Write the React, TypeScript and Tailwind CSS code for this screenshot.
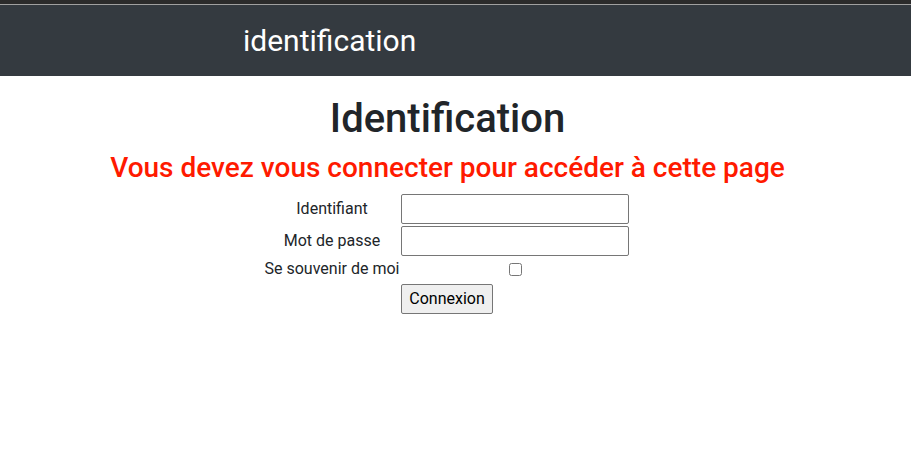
export default function App() {
  return (
    <div className="min-h-[460px] bg-white font-['Roboto',sans-serif] text-[#212529]">
      <div className="h-[4px] bg-[#2b2b2b]" />
      <div className="h-[1px] bg-[#a0a0a0]" />
      <nav className="flex h-[71px] items-center bg-[#343a40] pl-[243px]">
        <span className="text-[30px] text-white">identification</span>
      </nav>
      <main className="flex w-[895px] flex-col items-center">
        <h1 className="mt-[19px] text-[40px] leading-[48px] font-medium">Identification</h1>
        <h3 className="mt-[8px] text-[28px] leading-[34px] font-medium text-[#ff1a00]">
          Vous devez vous connecter pour accéder à cette page
        </h3>
        <form className="mt-[9px] grid grid-cols-[136px_228px] gap-x-[2px] gap-y-[2px] pr-[3px] text-[16px]">
          <label className="flex h-[30px] items-center justify-center pl-[2px]">Identifiant</label>
          <input type="text" className="h-[30px] w-[228px] rounded-[2px] border border-[#767676] px-1" />
          <label className="flex h-[30px] items-center justify-center pl-[2px]">Mot de passe</label>
          <input type="password" className="h-[30px] w-[228px] rounded-[2px] border border-[#767676] px-1" />
          <label className="flex h-[22px] items-center justify-center whitespace-nowrap pl-[2px]">
            Se souvenir de moi
          </label>
          <div className="flex h-[22px] items-center justify-center">
            <input type="checkbox" className="h-[13px] w-[13px]" />
          </div>
          <div />
          <div className="pt-[2px]">
            <button
              type="button"
              className="h-[30px] w-[92px] rounded-[2px] border border-[#767676] bg-[#efefef] text-center text-[16px] text-black"
            >
              Connexion
            </button>
          </div>
        </form>
      </main>
    </div>
  )
}
